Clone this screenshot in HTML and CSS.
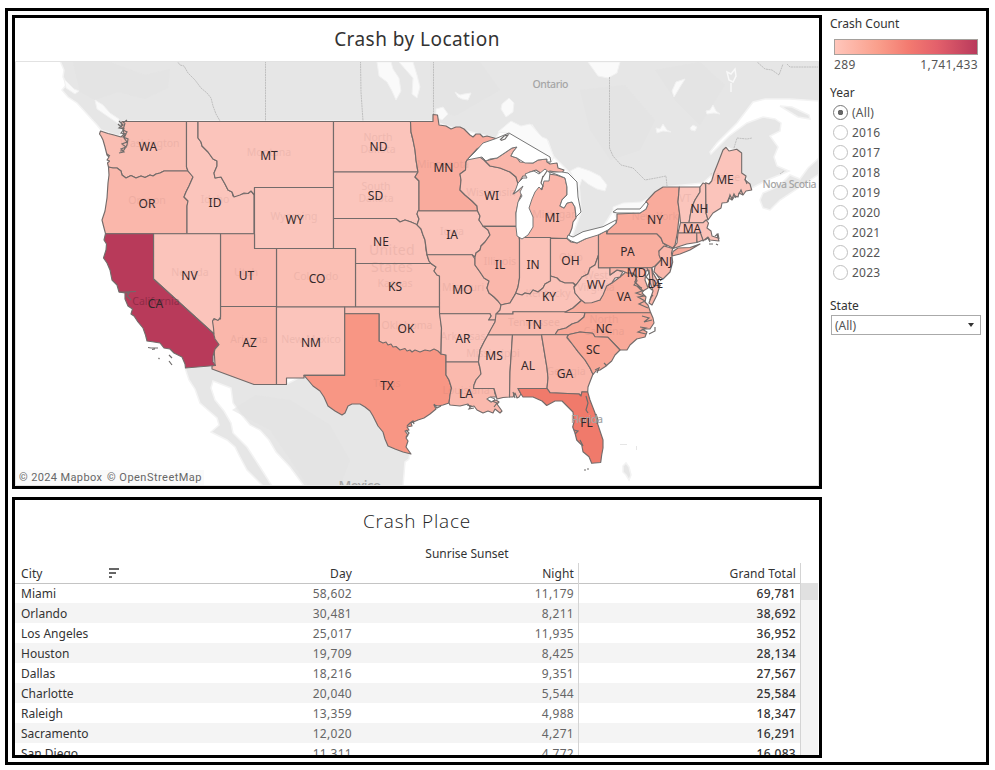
FILE: index.html
```html
<!DOCTYPE html>
<html lang="en">
<head>
<meta charset="utf-8">
<title>Crash Dashboard</title>
<link rel="stylesheet" href="styles.css">
</head>
<body>
<div class="dashboard">
  <main class="main">
    <section class="panel map-panel">
      <h1 class="title">Crash by Location</h1>
      <svg class="map" viewBox="15 61 804 425" width="804" height="425">
        <!-- Neighbouring land -->
        <g class="land">
          <path d="M60 61L64 70 63 77 67 84 62 90 68 97 77 103 87 114 97 125 101 130 112 134 120 136 123 121 433 121 450 127 496 138 500 131 512 124 520 128 532 125 541 138 548 141 553 156 568 171 579 184 581 212 572 237 603 227 613 211 640 209 647 201 663 187 703 183 714 173 726 147 742 153 742 173 752 188 767 180 782 174 789 171 777 166 774 157 778 147 770 136 780 131 781 123 775 119 763 117 747 123 729 136 720 145 711 154 710 152 717 143 737 123 753 102 765 99 790 99 819 101 819 61Z"/>
          <path d="M760 200L763 193 779 186 790 175 800 179 808 168 819 158 819 174 800 187 780 200 770 210 763 208Z"/>
          <path d="M780 106L792 107 809 115 810 119 798 117Z"/>
          <path d="M185 368L212 366 254 384 287 384 304 375 345 375 390 430 410 454 409 459 405 462 403 486 304 486 290 467 276 452 269 440 260 430 250 425 240 413 233 403 231 388 213 381 211 388 215 400 224 411 231 423 233 433 247 447 260 467 272 486 263 486 247 470 240 457 235 447 227 440 211 432 219 425 217 418 209 411 200 403 195 389 189 380Z"/>
          <path d="M623 466L626 463 629 467 631 475 629 480 626 475 623 472Z"/>
        </g>
        <path class="cay" d="M620 444H627V445H620ZM636 446H637V450H636Z"/>
        <g class="shade">
          <path d="M73 62L110 62 145 75 170 69 168 88 145 99 118 92 95 100 80 92ZM430 62L480 62 500 90 455 116 432 107ZM580 90L625 85 655 120 640 150 610 160 590 130ZM655 70L700 62 725 85 700 125 675 100ZM232 410L256 395 290 400 330 425 350 460 340 486 308 486 270 430Z"/>
        </g>
        <g class="lake">
          <path d="M377 62L391 62 393 69 399 78 401 91 396 100 392 91 387 82 379 76ZM399 62L413 62 417 75 420 87 417 98 412 94 413 78 406 70ZM455 92L460 95 464 94 471 93 468 100 462 99 458 97ZM502 104L509 98 514 103 513 112 506 117 501 109ZM436 109L443 107 448 114 442 120 436 117ZM588 62L620 62 617 73 608 78 598 76ZM672 91L676 82 685 79 680 87 674 97ZM656 128L660 129 663 124 667 130 671 132 663 131 657 133ZM690 128L693 125 697 127 695 131 691 130ZM706 111L710 110 713 105 716 111 720 114 714 113 707 114ZM95 100L103 105 110 113 119 119 119 124 110 118 97 109ZM64 79L74 89 79 91 75 94 66 88Z"/>
          <path d="M570 171L578 167 590 171 600 176 607 185 605 191 597 189 588 184 582 179 579 188 580 198 577 184ZM508 133L498 132 511 121 521 126 530 124 542 137 547 139 554 157 551 162 530 165 495 160 469 160Z"/>
          <path d="M613 211L613 207 623 203 641 202 648 198 646 210 635 217 617 219Z"/>
        </g>
        <path class="ring" d="M727 72L731 74 735 69 736 76 733 82 729 80ZM731 83V92"/>
        <g class="province">
          <path d="M177 61L180 65 184 66 188 73 195 80 198 84 201 88 207 93 211 98 213 106 216 114 220 121M265.500 61V121M360.500 61L361 92 363 121M433.500 61V115M609.500 77V148L613 156 621 165 633 168 639 174 645 180 656 178 666 176 667 186M756 61L765 69 772 70 779 75 783 64M787 64L790 67H819M734 148L737 138 747 139 752 138M780 174L784 171"/>
        </g>

        <!-- States -->
        <g class="states">
          <path fill="#fabeb3" d="M122 121.500H186.500V167L188 171 164 171 160 173 156 174 153 176 150 175 145 177.500 141 176 136 178 131 175.500 126 178 122 175 121 171 117 168 113 168 108.500 167 107.500 163 109.500 161 107 160 109 157 107 155 105 147 103 140 101 136 99.500 134 100.500 131 108 133.500 114 135 121 137 124 134 123 129 121 126Z"/>
          <path fill="#fab7ab" d="M108.500 167L113 168 117 168 121 171 122 175 126 178 131 175.500 136 178 141 176 145 177.500 150 175 153 176 156 174 160 173 164 171 188 171 191 174 193 177 189 186 186 192 184 197 188 201 187 206V233.700H105.500L103.500 226 102 220 105 211 107 198 108 183 109 175Z"/>
          <path fill="#fbc5bc" d="M186.500 121.500H198V138L201 142 202 146 208 152 213 159 217 161 217 166 214 173 215 178 221 177 225 184 228 190 232 192 233 196 240 194 248 193.500 251 191 254 195V233.700H187V206L188 201 184 197 186 192 189 186 193 177 188 171 186.500 167Z"/>
          <path fill="#fbc4bb" d="M198 121.500H333.500V187.500H254.500V195L251 191 248 193.500 244 193 240 195 234 197 232 192 228 190 225 184 221 177 215 178 214 173 217 166 217 161 213 159 208 152 202 146 201 142 198 138Z"/>
          <path fill="#fbc5bc" d="M254.500 187.500H333.500V248.500H254.500Z"/>
          <path fill="#fbc4bb" d="M333.500 121.500H410.500L411 132 413 140 415 150 416 160 417.500 170 418 172H333.500Z"/>
          <path fill="#fbc5bc" d="M333.500 172H418L415 177 419 181V210L417 214 419 219 417 225 411 222 405 220 400 222 396 218.500H333.500Z"/>
          <path fill="#fbc2b9" d="M333.500 218.500H396L400 222 405 220 411 222 418 225 421 229 423 235 425 240 426 250 427 255 429 261 431 263.500H355.500V248.500H333.500Z"/>
          <path fill="#fbc1b7" d="M355.500 263.500H431L436 267 434 271 437 275 439.500 276V307H355.500Z"/>
          <path fill="#fbbfb4" d="M276.500 248.500H355.500V307H276.500Z"/>
          <path fill="#fabab0" d="M220.500 233.700H254.500V248.500H276.500V307H220.500Z"/>
          <path fill="#fab7ab" d="M220.500 306.500H276.500V384.500H254L212 369V366L215 365 213 330 212 320 220.500 319Z"/>
          <path fill="#fbc4bb" d="M153.500 233.700H220.500V317L218 320.500 214 318.500 212.500 321 213.500 328 214 334 153.500 279Z"/>
          <path fill="#b83a5a" d="M105.500 233.700H153.500V279L213.500 333.500 215 339 219 344.500 215 349 213 356 213 362 215.500 365.500 185.500 368 185 364 182 357 174 353 170 349 164 348 160 343 154 342 147 341 145.500 335 143 328 138 322 134 316 131 314 132.500 309 128 306 125 299 125 293 119 292 117 285 112 280 110 270 107 263 103.500 258 106 250 106.500 244 104 240Z"/>
          <path fill="#fbc4bb" d="M276.500 307H344.700V375.300H304L304 378H286.500V384.500H276.500Z"/>
          <path fill="#fbbfb4" d="M344.700 307H439.500L440 314 441.500 328 441 354 379 350V313.700H344.700Z"/>
          <path fill="#f89684" d="M344.700 313.700H379V341L383 343 386 342 388 345 391 344 393 347 396 346.500 400 350 405 348.500 407 351 410 350 412 352 415 350 420 352 425 350 430 351 434 349 438 351 441 354 446 355V375L449 380 451.500 388 450 395 449 403 443 405 438 406 434 405 436 409 430 414 424 418 418 420 411 423 412 426 407 427 409 430 405 431 408 435 406 438 408 441 406 447 411 454 403 452 395 449 388 446 385 439 383 432 378 426 373 416 370 411 365 407 360 404 352 404 348 406 345 413 342 415 335 411 328 406 324 397 320 391 313 386 308 380 304 375.300H344.700Z"/>
          <path fill="#fbc3ba" d="M418 210.700H477.500L480 216 479 220 484 225 488 230 490 235 485 242 481 246 480 250 476 253 475 257 472 254.700H427L425 240 423 235 421 229 417 225 419 219 417 214Z"/>
          <path fill="#f9ab9d" d="M410.500 121.500H433V114.500L437.500 115 439 125 446 126 451 129 456 127 460 127 464 129 467 132 470 135 473 137 476 134 480 134 483 137 487 136 496 138.500 485 144 477 149 468 159 466 162 465.500 170 460 174 461 180 460 190 465 195 472 201 477 206 477.500 210.700H419V181L415 177 418 172 416 160 415 150 413 140 411 132Z"/>
          <path fill="#fabeb3" d="M427 254.700H472L475 259 475 265 480 272 484 278 489 281 487 288 489 293 494 297 498 301 501 305 500 310 497 314 496 320H488.500L491 316 490 313.700H439.500V276L437 275 434 271 436 267 431 263.500 429 261Z"/>
          <path fill="#fbc3ba" d="M439.500 313.700H490L491 316 488.500 320H496L492 328 488 335 484 342 480 350 479 357 478.500 362H446V355L441 354 441.500 328Z"/>
          <path fill="#fab9ad" d="M446 362H478.500L480 368 481 374 476 380 474 385 473.500 388.500H494L495 394 497 397 491 397 487 399 491 402 496 400 499 402 497 404 502 411 500 413 495 409 493 413 488 411 483 413 477 410 474 406 470 407 468 404 460 406 450 405 449 403 450 395 451.500 388 449 380 446 375Z"/>
          <path fill="#fbc3ba" d="M488 334.700H512.500L510 372 509.500 397 503 397.500 497 399 494 388.500H473.500L474 385 476 380 481 374 480 368 478.500 362 480 350 484 342Z"/>
          <path fill="#fabdb2" d="M512.500 334.700H541.500L547 368 548 378 547 388.500H518L521 394 519 397 517 398 515 393 513 397 509.500 397 510 372Z"/>
          <path fill="#fbc1b7" d="M467 160L474 157 480 157 485 161 490 166 500 168 510 172 516 177 518 183 517 188 513 194 519 190 527 178 524 188 519 200 516 213 516.700 226.300H483L479 220 480 216 477.500 210.700 477 206 472 201 465 195 460 190 461 180 460 174 465.500 170 466 162Z"/>
          <path fill="#fab6aa" d="M485 161L497 158 506 152 512 148 517 147 513 152 511 156 517 158 520 162 533 163 538 160 547 159 547 162 550 164 557 163 558 168 564 170 562 173 550 171 542 174 536 170 530 172 526 176 523 176 518 184 516 177 510 172 500 168 490 166Z"/>
          <path fill="#fab6aa" d="M520 237.500L527 205 537 183 548 174 556 175 565 178 567 187 567 195 562 200 560 206 564 208 567 203 572 202 575 207 576 218 573 222 572 228 570 233 567 238.500 550.500 238Z"/>
          <path fill="#fab7ab" d="M483 226.300H516.700L519.500 240V278L518 287 516 293 513 298 510 303 505 304 501 305 498 301 494 297 489 293 487 288 489 281 484 278 480 272 475 265 475 257 476 253 480 250 481 246 485 242 490 235 488 230Z"/>
          <path fill="#fbc2b8" d="M519.500 237.500H550.500V281L545 284 543 288 538 292 533 290 530 294 525 293 522 295 518 294 515 295 518 287 519.500 278Z"/>
          <path fill="#fabcb1" d="M550.500 238.500H567L571 242 577 243 585 239 598.500 233V255L595 265 590 268 588 274 582 277 579 281 576 285 573 283 565 283 560 281 557 278 550.500 276Z"/>
          <path fill="#fbc2b8" d="M501 305L505 304 510 303 513 298 516 293 518 294 522 295 525 293 530 294 533 290 538 292 543 288 545 284 550.500 281V276L557 278 560 281 565 283 573 283 575 285 574 287 575 293 580 299 582 300 573 308 565 312.300 513 311.700V314H496L500 310Z"/>
          <path fill="#fabbaf" d="M496 314H513V311.700H565L585 312.700 584 317 578 322 572 324 566 328 558 330 555 334.700H488L491 329 495 322Z"/>
          <path fill="#f9ae9f" d="M565 312.300L573 308 582 300 591 302 600 300 606 286 612 283 620 277 627 271 633 274 637 277 635 282 640 287 644 290 642 293 646 297 645 302 648 305 650.700 313Z"/>
          <path fill="#fbc5bc" d="M598.500 255V267.700H610V275L617 270 622.700 272 620 277 615 278 611.700 283 606.700 286 603 295 600 300 591.700 302.700 585 303 580 299 575 293 574 287 576 285 579 281 582 277 588 274 590 268 595 265Z"/>
          <path fill="#f9a999" d="M585 312.700H650.700L653 318 654 323 650 329 642 329 647 332 645 337 636.700 339 630 345 627 350 620 350 608 337.300 595 336.700 592.700 333.300 580 332 568 334.700H555L558 330 566 328 572 324 578 322 584 317Z"/>
          <path fill="#fab6aa" d="M541.500 334.700H568L567 338 573 345 578 351.700 585 360 590 368 593 374 590 381.700 588 387 587.700 392H582L581 396 579 394 550 392.700 547 388.500 548 378 547 368Z"/>
          <path fill="#f9a797" d="M567 337L569 334.500 580 332 592.700 333.300 595 336.700 608 337.300 620 350 615 355 611.700 361 605 366.700 600 370 596 371 593 374.500 590 368 585 360 578 351.700 573 345Z"/>
          <path fill="#f07a6b" d="M518 388.500H547L550 392.700 579 394 581 396 582 391.700 587.700 392 590 400 595 413 598 425 603 440 603 448 601.700 455 600.700 462.500 591.700 463.300 589 456.700 583 451.700 581.700 445 576.700 440 575 433 572.700 427 574 422 573 412 568 407 562 401 555 401 546.700 405.500 542 401 533 397 523 397 521 394Z"/>
          <path fill="#f9ae9f" d="M598.500 235L606.700 230V233.700H656.700L661 238 663 243 667 246 659 251 660 255 661 260 655 266 651.500 267.700H598.500Z"/>
          <path fill="#f9ab9c" d="M679.300 187H663L655 192 646 201.700 648 204 646 209 640 213 617 214 617 219 616 223 608 230 606.700 233.700H656.700L661 238 663 243 672.700 248 675 245 677.300 233 679.500 213 678 202Z"/>
          <path fill="#f9ab9c" d="M672 256L673 251.500 678 248 690 247.500 700 244 690 250 680 254Z"/>
          <path fill="#fbc5bc" d="M679.300 187H700L700 192 695 200 691.500 208 689 222.500H680.500L679.500 213 678 202Z"/>
          <path fill="#fbc5bc" d="M700 187L703 183 705.500 184 706 213 708 219 704 222.500H689L691.500 208 695 200 700 192Z"/>
          <path fill="#fbc4bb" d="M705.700 182.700L709 184 711.700 181 714 173 718 163 723 150 726 147.300 729 151 736.700 149.300 741.700 153V173L746 176 745 180 750 184 751.700 190 746 191 743 195 739 193 738 197 735 196 732 200 729 198 727 202.500 722 203 721 208 713 213 708 220 706 213Z"/>
          <path fill="#fbc2b8" d="M680.500 222.700H703L706 220 708.500 223 707 228 711 231 712 236 718 238 717 234 719 241 710 240 708 237 703 241 700 233H678Z"/>
          <path fill="#fabbb0" d="M678 233H696.700V242.500L686.700 244 673 248.500 677 243ZM696.700 233H700.500L703 240 697 242.500Z"/>
          <path fill="#fab7ab" d="M664 246L672.700 248.500 671.500 253 672.700 262 670 272 663 279 658 276 654 271.700 655 266.700 661 260 659 255V251Z"/>
          <path fill="#fab5a8" d="M610 267.700H651.700L653 273 657 280 660 285 657 295 652 305 649 303 653 291 650 282 649 270 646 271 645 280 648 288 643 291 640 287 635 282 637 277 633 273 627 273 622.700 271 617 270 610 275Z"/>
          <path fill="#fbc0b6" d="M651.700 268L653 273 657 280 660 285.500H653.500Z"/>
        </g>

        <!-- Great Lakes, inlets and islands -->
        <g class="water">
          <path d="M496 138.500L509 133 550 157 551 162 547 162 547 159 538 160 533 163 525 163 517 158 511 156 513 152 517 147 512 148 506 152 497 158 490 159 486 161 482 157 467 160 475 152 483 143Z"/>
          <path d="M527 178L525 174 530 172 534 171 539 174 545 169 550 173 549 181 544 181 542 190 539 187 535 192 532 199 529 208 533 217 533 227 528 235 522 239 517 236 516 227 516 213 518 202 522 196 520 192 523 186 514 194 518 183 523 178Z"/>
          <path d="M562 172L568 173 577 182 578 197 581 212 576 217 575 207 572 202 567 203 564 208 560 206 562 200 567 195 567 187 565 178 558 175 550 172Z"/>
          <path d="M567 238L568 235 573 237 583 231.700 603 226.700 616 220 616 223 608 230 598 235 585 239 577 243 571 241Z"/>
          <path d="M617 213L613 212 617 209 640 209 646 202 648 204 646 209 640 213Z"/>
          <path d="M487 399L490 397 495 399 492 402Z"/>
        </g>
        <g class="shore">
          <path d="M119 121L123 125 119 128 124 129 121 133 126 134 124 138 127 142 122 144 126 147 121 149 124 152 119 153M125 123L123 130 127 132 123 137 128 139 127 145 124 150 120 151M107 154L110 156M127 120L123 123M118 124L121 127"/>
          <path d="M119 292H126L136 291.500M126 293L129 293 127 296 131 300M148 347.500L151 348 158 348M152 349.500L155 349M158.500 358L159.500 359M169 355L172 358M169 361L172 365"/>
          <path d="M500 140L504 136 508 135 505 139 501 140.500M543 176L541 183 543 186 541 190M547 171L543 177"/>
          <path d="M635 275L637 281 634 285 642 288M637 286L642 291 636 293 644 296 638 297 645 301 639 304 648 308M647 268L649 273 646 277 650 281 648 286 652 290M642 316L649 318 644 322 652 320M640 327L646 328 638 332 646 334M655 327L655 331 649 334M650 300L651 297 653 295M655 286L658 281M657 275L661 281"/>
          <path d="M728 202L730 195 732 199 734 194 736 198M739 194L741 190 743 195M745 179L747 184M705 240L708 238 710 242M709 244H713M716 244L718 245M715 236L718 234 719 239"/>
          <path d="M586 396L588 403 586 410 588 413M574 430L578 431 575 434M580 440L583 446M596 414L598 420 597 424M584 470L586 470M587 469L589 469"/>
          <path d="M407 426L410 423 413 421 414 424M406 430L409 433 406 437M434 404L437 408 441 406M467 405L471 406 469 409 474 408M492 401L497 403 494 407M513 392L515 398M595 370L599 368 597 373M607 366L604 363"/>
        </g>

        <!-- Base map names -->
        <g class="base">
          <text x="550.500" y="88" textLength="36">Ontario</text>
          <text x="789.500" y="188" textLength="54">Nova Scotia</text>
          <text x="587" y="423" textLength="32">Florida</text>
          <text class="country" x="360" y="491" textLength="43">Mexico</text>
        </g>
        <g class="ghost">
          <text x="150" y="147">Washington</text><text x="147" y="204">Oregon</text><text x="215" y="203">Idaho</text><text x="269" y="156">Montana</text>
          <text x="294" y="220">Wyoming</text><text x="378" y="141">North</text><text x="378" y="153">Dakota</text><text x="376" y="190">South</text><text x="376" y="202">Dakota</text>
          <text x="443" y="168">Minnesota</text><text x="491" y="196">Wisconsin</text><text x="452" y="235">Iowa</text><text x="555" y="218">Michigan</text>
          <text class="country" x="392" y="255">United</text><text class="country" x="392" y="272">States</text>
          <text x="190" y="276">Nevada</text><text x="246" y="276">Utah</text><text class="dark" x="156" y="305">California</text><text x="249" y="343">Arizona</text>
          <text x="311" y="343">New Mexico</text><text x="316" y="280">Colorado</text><text x="395" y="287">Kansas</text><text x="407" y="329">Oklahoma</text>
          <text x="387" y="387">Texas</text><text x="463" y="291">Missouri</text><text x="463" y="340">Arkansas</text><text x="500" y="265">Illinois</text>
          <text x="493" y="357">Mississippi</text><text x="466" y="394">Louisiana</text><text x="534" y="326">Tennessee</text><text x="548" y="297">Kentucky</text>
          <text x="571" y="261">Ohio</text><text x="596" y="279">West</text><text x="596" y="291">Virginia</text><text x="604" y="323">North</text><text x="604" y="335">Carolina</text>
          <text x="566" y="375">Georgia</text><text x="655" y="220">New York</text><text x="685" y="202">VT</text><text x="725" y="181">Maine</text>
        </g>
        <g class="abbr">
          <text x="148" y="151">WA</text><text x="147" y="208">OR</text><text x="215" y="207">ID</text><text x="269" y="160">MT</text>
          <text x="378.500" y="151">ND</text><text x="375.500" y="200">SD</text><text x="294.500" y="224">WY</text><text x="381" y="246">NE</text>
          <text x="443.500" y="172">MN</text><text x="491.500" y="200">WI</text><text x="552" y="222">MI</text><text x="452" y="239">IA</text>
          <text x="655" y="224">NY</text><text x="725" y="184">ME</text><text x="699.500" y="213">NH</text><text x="692" y="233">MA</text>
          <text x="627.500" y="256">PA</text><text x="666" y="266">NJ</text><text x="636.500" y="277">MD</text><text x="655.500" y="288">DE</text>
          <text x="570.500" y="265">OH</text><text x="533" y="269">IN</text><text x="500" y="269">IL</text><text x="596" y="289">WV</text>
          <text x="624" y="301">VA</text><text x="549" y="301">KY</text><text x="534" y="329">TN</text><text x="604" y="333">NC</text>
          <text x="593" y="354">SC</text><text x="565" y="378">GA</text><text x="528" y="370">AL</text><text x="494" y="360">MS</text>
          <text x="586.500" y="427">FL</text><text x="466" y="398">LA</text><text x="463" y="343">AR</text><text x="462.500" y="294">MO</text>
          <text x="395" y="291">KS</text><text x="406" y="333">OK</text><text x="387" y="390">TX</text><text x="311" y="347">NM</text>
          <text x="317" y="283">CO</text><text x="246.500" y="280">UT</text><text x="189.500" y="280">NV</text><text x="155.500" y="308">CA</text><text x="249.500" y="347">AZ</text>
        </g>
        <path class="credit-bg" d="M16 470H204V485H16Z"/>
        <text class="credit" x="19" y="481" textLength="83">© 2024 Mapbox</text>
        <text class="credit" x="107" y="481" textLength="94.500">© OpenStreetMap</text>
        <path class="edge" d="M15.500 485.500V61.500H818.500V485.500Z"/>
      </svg>
    </section>

    <section class="panel table-panel">
      <h2 class="title thin">Crash Place</h2>
      <div class="super">Sunrise Sunset</div>
      <div class="sheet">
        <div class="grid">
          <div class="row head"><span>City <svg class="sort" width="11" height="10" viewBox="0 0 11 10"><path d="M0 0H10V2H0ZM0 4H7V6H0ZM0 8H3V10H0Z"/></svg></span><span>Day</span><span>Night</span><span>Grand Total</span></div>
          <div class="row"><span>Miami</span><span>58,602</span><span>11,179</span><span>69,781</span></div>
          <div class="row"><span>Orlando</span><span>30,481</span><span>8,211</span><span>38,692</span></div>
          <div class="row"><span>Los Angeles</span><span>25,017</span><span>11,935</span><span>36,952</span></div>
          <div class="row"><span>Houston</span><span>19,709</span><span>8,425</span><span>28,134</span></div>
          <div class="row"><span>Dallas</span><span>18,216</span><span>9,351</span><span>27,567</span></div>
          <div class="row"><span>Charlotte</span><span>20,040</span><span>5,544</span><span>25,584</span></div>
          <div class="row"><span>Raleigh</span><span>13,359</span><span>4,988</span><span>18,347</span></div>
          <div class="row"><span>Sacramento</span><span>12,020</span><span>4,271</span><span>16,291</span></div>
          <div class="row"><span>San Diego</span><span>11,311</span><span>4,772</span><span>16,083</span></div>
        </div>
        <div class="scrollbar"><div class="thumb"></div></div>
      </div>
    </section>
  </main>

  <aside class="side">
    <h3 class="label">Crash Count</h3>
    <div class="ramp"></div>
    <div class="range"><span>289</span><span>1,741,433</span></div>
    <h3 class="label year">Year</h3>
    <ul class="radios">
      <li class="on">(All)</li><li>2016</li><li>2017</li><li>2018</li><li>2019</li><li>2020</li><li>2021</li><li>2022</li><li>2023</li>
    </ul>
    <h3 class="label state">State</h3>
    <div class="select"><span>(All)</span><i></i></div>
  </aside>
</div>
</body>
</html>
```
FILE: styles.css
```css
* { box-sizing: border-box; }
body { margin: 0; background: #fff; font-family: "Noto Sans", "Open Sans", sans-serif; font-size: 12px; color: #333; }
h1, h2, h3, ul { margin: 0; padding: 0; font-weight: 400; list-style: none; }

.dashboard { display: flex; width: 984px; height: 757px; margin: 8px 0 0 5px; border: 3px solid #000; padding: 4px 0 0 4px; }
.main { display: flex; flex-direction: column; gap: 8px; width: 810px; }
.panel { border: 3px solid #000; overflow: hidden; }
.map-panel { height: 474px; }
.table-panel { height: 261px; }
.title { height: 43px; line-height: 43px; text-align: center; font-size: 19px; letter-spacing: .45px; color: #333; }
.thin { font-family: "Open Sans", sans-serif; font-weight: 300; letter-spacing: .8px; color: #222; }

.map { display: block; background: #fff; }
.land path { fill: #e6e6e6; stroke: #f3f3f3; stroke-width: 1.5; }
.cay { fill: #e6e6e6; }
.shade path { fill: #e2e2e2; opacity: .6; }
.lake path { fill: #fafafa; stroke: #f1f1f1; stroke-width: 1; }
.ring { fill: none; stroke: #f8f8f8; stroke-width: 1.500; }
.province path { fill: none; stroke: #b5b5b5; stroke-width: .8; stroke-dasharray: 2 .6; }
.states path { stroke: #736b6a; stroke-width: 1.15; stroke-linejoin: round; }
.water path { fill: #fff; stroke: #777; stroke-width: 1; stroke-linejoin: round; }
.shore path { fill: none; stroke: #6f6c6b; stroke-width: 1.2; }
.map text { text-anchor: middle; }
.base text { font-size: 10.500px; fill: #a5a5a5; font-weight: 500; }
.map .country { font-size: 14px; letter-spacing: .3px; }
.ghost text { font-size: 10.500px; fill: #9a6a65; opacity: .13; }
.ghost .dark { fill: #4a1025; opacity: .35; }
.abbr text { font-size: 12px; fill: #33282a; }
.credit-bg { fill: #fafafa; opacity: .9; }
.map .credit { font-family: Roboto, sans-serif; font-size: 11px; fill: #666; text-anchor: start; }
.edge { fill: none; stroke: #e2e2e2; }

.super { height: 20px; line-height: 21px; width: 664px; margin-left: 120px; text-align: center; }
.sheet { display: flex; height: 200px; }
.grid { width: 786px; border-right: 1px solid #d4d4d4; }
.row { display: grid; grid-template-columns: 121px 221px 222px 221px; height: 20px; line-height: 21px; }
.row span { padding-right: 5px; text-align: right; color: #666; letter-spacing: .3px; }
.row span:first-child { padding: 0 0 0 6px; text-align: left; color: #333; letter-spacing: 0; }
.row span:nth-child(3) { border-right: 1px solid #d4d4d4; padding-right: 4px; }
.row span:last-child { color: #333; font-weight: 500; padding-right: 4px; }
.row:nth-child(odd) { background: #f4f4f4; }
.row.head { background: #fff; }
.row.head span { color: #333; font-weight: 400; letter-spacing: .1px; }
.row:nth-child(2) { box-shadow: inset 0 1px #c4c4c4; }
.sort { float: right; margin: 5px 16px 0 0; fill: #666; }
.scrollbar { width: 17px; margin-top: 20px; background: #f4f4f4; }
.thumb { height: 17px; background: #e0e0e0; }

.side { padding: 1px 0 0 8px; width: 164px; }
.label { height: 18px; line-height: 18px; font-size: 12px; color: #333; }
.side .label { margin-top: -1px; }
.ramp { width: 144px; height: 16px; margin: 6px 0 0 4px; border: 1px solid #a5a09c; background: linear-gradient(90deg, #ffc6bb, #fa9f8c 30%, #f37a70 52%, #e3606b 72%, #b93a5c); }
.range { display: flex; justify-content: space-between; width: 144px; margin-left: 4px; height: 20px; line-height: 20px; color: #555; letter-spacing: .35px; }
.side .year { margin-top: 9px; }
.radios li { display: flex; align-items: center; gap: 4px; height: 20px; padding-left: 3px; color: #555; letter-spacing: .2px; }
.radios li::before { content: ""; width: 13px; height: 13px; border: 1px solid #c0c0c0; border-radius: 50%; }
.radios .on::before { border-color: #777; background: radial-gradient(circle, #666 2.500px, #fff 3px); }
.side .state { margin-top: 15px; }
.select { display: flex; justify-content: space-between; align-items: center; width: 150px; height: 20px; margin-left: 1px; padding: 0 6px 0 3px; border: 1px solid #aaa; color: #555; }
.select i { border: 3px solid transparent; border-top: 4px solid #333; border-bottom: 0; }
```
